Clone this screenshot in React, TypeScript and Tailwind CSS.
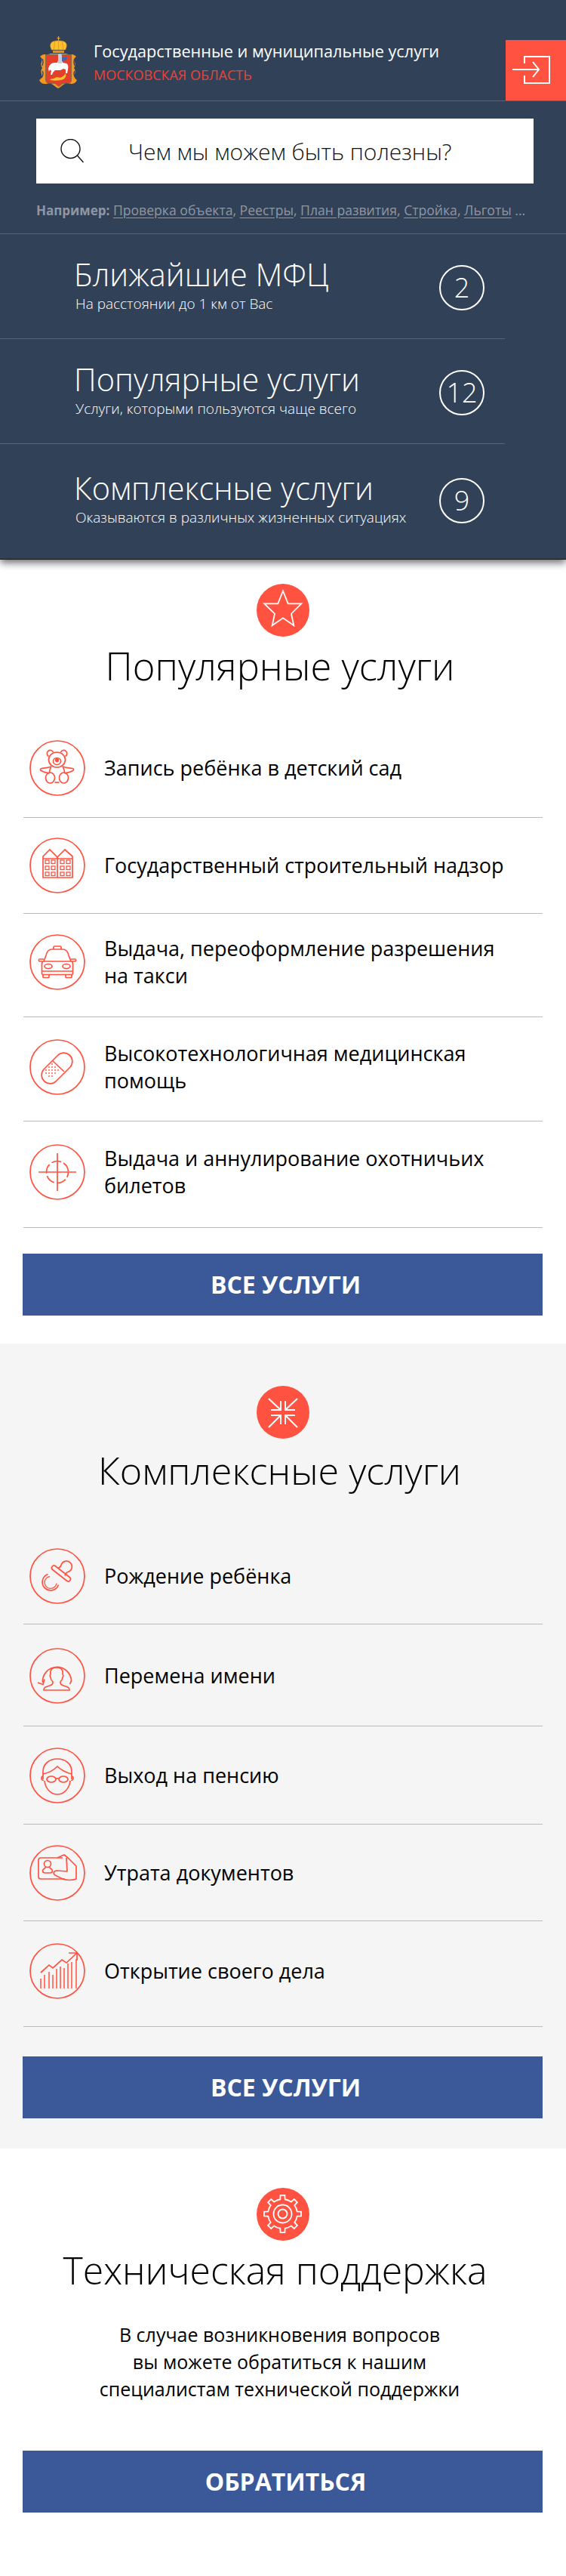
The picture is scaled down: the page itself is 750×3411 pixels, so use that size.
import React from "react";

const R = "#ff5240";

function gearPath(cx: number, cy: number, outer: number, inner: number, teeth: number) {
  const pts: string[] = [];
  const step = (Math.PI * 2) / teeth;
  const p = (r: number, t: number) => `${(cx + r * Math.cos(t)).toFixed(2)} ${(cy + r * Math.sin(t)).toFixed(2)}`;
  for (let i = 0; i < teeth; i++) {
    const a = i * step - Math.PI / 2;
    const w = step * 0.21;
    const w2 = step * 0.15;
    pts.push(`${i === 0 ? "M" : "L"}${p(inner, a - w)}`, `L${p(outer, a - w2)}`, `L${p(outer, a + w2)}`, `L${p(inner, a + w)}`);
    pts.push(`A${inner} ${inner} 0 0 1 ${p(inner, a + step - w)}`);
  }
  return pts.join(" ") + "Z";
}

function Emblem() {
  return (
    <svg width="54" height="75" viewBox="0 0 54 75" className="shrink-0">
      <path d="M26.500 0v6M24.500 2.500h4" stroke="#f6a623" strokeWidth="1.200" />
      <path d="M17.500 18c-3-5-2-10 2-11 2-1 4-1 7-1s6 0 7 1c4 1 5 6 2 11z" fill="#fdc02f" stroke="#d98a12" strokeWidth=".6" />
      <path d="M26.500 6v12M21.500 7l-1 11M31.500 7l1 11" stroke="#d98a12" strokeWidth=".7" />
      <path d="M19 19h15v3H19z" fill="#e8930f" />
      <path d="M8 24c-3 0-5 2-6 3 3 2 3 4 2 7-1 3-1 5 1 8-2 3-2 5-1 8 1 4 0 6-3 8 2 4 4 5 8 5 3 0 5-1 8 0 3 1 6 5 9 6 3-1 6-5 9-6 3-1 5 0 8 0 4 0 6-1 8-5-3-2-4-4-3-8 1-3 1-5-1-8 2-3 2-5 1-8-1-3-1-5 2-7-1-1-3-3-6-3-3 0-6 0-8-1H16c-2 1-5 1-8 1z" fill="#f6981f" />
      <path d="M5 30c2 3 1 6 0 9M5 46c2 3 1 6-1 9M48 30c-2 3-1 6 0 9M48 46c-2 3-1 6 1 9M10 66c4-1 7 0 10 3M43 66c-4-1-7 0-10 3" stroke="#314157" strokeWidth="1.300" fill="none" />
      <path d="M9 24h35v33c0 4-2 6-6 6h-6l-5 4-5-4h-6c-4 0-7-2-7-6z" fill="#314157" opacity=".55" />
      <path d="M10 25h33v32c0 4-2 5-5 5h-6.500l-5 4-5-4H15c-3 0-5-1-5-5z" fill="#e2402c" />
      <path d="M13 43c1-4 3-7 7-8l5 0 2-6h3l2 6 5 1c2 1 3 4 2 8l-1 5-2 0 0-5-3-1-4 2-7 0-3 3-1 3-2 0 1-5-2-2-1 3z" fill="#fff" />
      <path d="M26 24l3-1 2 2 0 11-5 0z" fill="#c6d0dc" />
      <path d="M31 28l8-1-3 5-5 1z" fill="#3b6ab5" />
      <path d="M15 58c3-3 5-1 7-3 3-2 7 1 9-1 2-1 4-3 5-5 1 3 0 6-3 8-5 2-12 2-18 1z" fill="#f9c22e" />
    </svg>
  );
}

function LoginIcon() {
  return (
    <svg width="80" height="80" viewBox="0 0 80 80" fill="none" stroke="#fff" strokeWidth="2">
      <path d="M25 31V22H58V57H25V47" />
      <path d="M9 39H44M36 29l8 10-8 10" />
    </svg>
  );
}

function SearchIcon() {
  return (
    <svg width="32" height="32" viewBox="0 0 32 32" fill="none" stroke="#111" strokeWidth="1.400" className="shrink-0">
      <circle cx="13.500" cy="13" r="12.500" />
      <path d="M22.500 22l8 9" />
    </svg>
  );
}

function Count({ n }: { n: string }) {
  return (
    <div className="w-[60px] h-[60px] rounded-full border-2 border-white flex items-center justify-center text-[36px] font-light text-white leading-none">
      {n}
    </div>
  );
}

function HeaderRow({ t, s, n, cls }: { t: string; s: string; n: string; cls: string }) {
  return (
    <div className={`flex w-[669px] items-center justify-between pl-[98px] pr-[27px] ${cls}`}>
      <div className="text-white">
        <div className="text-[41.500px] font-light leading-[50px] mt-[-8px]">{t}</div>
        <div className="text-[19px] font-light leading-[26px] mt-[1px] ml-[2px]">{s}</div>
      </div>
      <Count n={n} />
    </div>
  );
}

const icons: Record<string, React.ReactNode> = {
  bear: (
    <>
      <path d="M25.500 21.500a4.300 4.300 0 1 1 6-5.500M41.500 16a4.300 4.300 0 1 1 6 5.500" />
      <ellipse cx="36.500" cy="26" rx="11" ry="10" />
      <ellipse cx="36.500" cy="28" rx="5" ry="4.500" />
      <circle cx="36.500" cy="26.500" r="1.800" fill={R} />
      <path d="M29 35c-4 1.500-9 2-13 2.500-2 .5-2 2-.5 3 3 2 7 2.500 11 3.500M44 35c4 1.500 9 2 13 2.500 2 .5 2 2 .5 3-3 2-7 2.500-11 3.500" />
      <path d="M29 35c-2 3-2.500 6-2.500 9M44 35c2 3 2.500 6 2.500 9" />
      <ellipse cx="27.500" cy="50" rx="6" ry="7" />
      <ellipse cx="45.500" cy="50" rx="6" ry="7" />
      <path d="M33.500 56h6" />
    </>
  ),
  building: (
    <>
      <path d="M18 53V25l9-9 10 10 10-10 10 9v28z" />
      <path d="M37 26v27M18 28h39" />
      <g strokeWidth="1.300">
        <rect x="21" y="30" width="5" height="4.500" />
        <rect x="29" y="30" width="5" height="4.500" />
        <rect x="41" y="30" width="5" height="4.500" />
        <rect x="49" y="30" width="5" height="4.500" />
        <rect x="21" y="38" width="5" height="4.500" />
        <rect x="29" y="38" width="5" height="4.500" />
        <rect x="41" y="38" width="5" height="4.500" />
        <rect x="49" y="38" width="5" height="4.500" />
        <rect x="21" y="46" width="5" height="4.500" />
        <rect x="29" y="46" width="5" height="4.500" />
        <rect x="41" y="46" width="5" height="4.500" />
        <rect x="49" y="46" width="5" height="4.500" />
      </g>
    </>
  ),
  taxi: (
    <>
      <path d="M32 20v-2.500c0-1 .5-1.500 1.500-1.500h7c1 0 1.500.5 1.500 1.500V20" />
      <path d="M19 36l3-8c1-5 4-8 8-8h14c4 0 7 3 8 8l3 8" />
      <path d="M18 36h38c1 .5 1.500 2 1.500 4v12c0 1-.5 1.500-1.500 1.500H18c-1 0-1.500-.5-1.500-1.500V40c0-2 .5-3.500 1.500-4z" />
      <path d="M17 36h-3.500c-1.500 0-1.500-3 0-3H19M57 36h3.500c1.500 0 1.500-3 0-3H55" />
      <ellipse cx="25" cy="42.500" rx="5" ry="3" />
      <ellipse cx="49" cy="42.500" rx="5" ry="3" />
      <path d="M17 49h40M18 53.500v3c0 .5.5 1 1 1h6c.5 0 1-.5 1-1v-3M48 53.500v3c0 .5.5 1 1 1h6c.5 0 1-.5 1-1v-3" />
    </>
  ),
  pill: (
    <>
      <path d="M19 40l18-18a10.500 10.500 0 0 1 17 15L36 55a10.500 10.500 0 0 1-17-15z" />
      <path d="M31 29l15 14" />
      <g fill={R} stroke="none">
        <circle cx="30" cy="33" r=".9" /><circle cx="34" cy="37" r=".9" /><circle cx="38" cy="41" r=".9" />
        <circle cx="26" cy="37" r=".9" /><circle cx="30" cy="41" r=".9" /><circle cx="34" cy="45" r=".9" />
        <circle cx="22" cy="41" r=".9" /><circle cx="26" cy="45" r=".9" /><circle cx="30" cy="49" r=".9" />
        <circle cx="30" cy="37" r=".9" /><circle cx="34" cy="41" r=".9" /><circle cx="26" cy="41" r=".9" />
        <circle cx="30" cy="45" r=".9" /><circle cx="22" cy="45" r=".9" /><circle cx="26" cy="49" r=".9" />
      </g>
    </>
  ),
  target: (
    <>
      <circle cx="37" cy="37" r="14.500" strokeDasharray="13 3.500" strokeDashoffset="6" />
      <path d="M37 12v50M12 37h50" />
    </>
  ),
  pacifier: (
    <>
      <path d="M24.500 34.500a11 11 0 1 0 14 14" />
      <path d="M27 37.500a8 8 0 1 0 9 9" strokeWidth="1.300" />
      <rect x="27" y="30.500" width="30" height="6" rx="3" transform="rotate(38 42 33.500)" />
      <path d="M38 26.500c3-1 3.500-2 4-4a7.300 7.300 0 1 1 9 9c-2 .5-3 1.500-4 5" />
    </>
  ),
  person: (
    <>
      <path d="M17.500 46a19 19 0 1 1 38-3c0 1.500-1 3-2 5" />
      <path d="M11 46l7 2.500 2-7" />
      <path d="M19 56c0-4 2-4 8-6 4-1.500 4-3 4-5-2-2-3-4-3-6-1-1-1-3 0-4-1-7 3-9 8-9s9 2 8 9c1 1 1 3 0 4 0 2-1 4-3 6 0 2 0 3.500 4 5 6 2 8 2 8 6z" />
    </>
  ),
  glasses: (
    <>
      <path d="M18 42V32c0-10 8-17 19-17s19 7 19 17v10" />
      <path d="M18 35c6-1 14-5 19-10 3 3 12 9 19 10" />
      <path d="M18 38c-2 0-3 3-1 5 .5.5 1 .5 2 .5M56 38c2 0 3 3 1 5-.5.5-1 .5-2 .5" />
      <path d="M20 44c1 10 8 18 17 18s16-8 17-18" />
      <ellipse cx="29" cy="42" rx="6" ry="4" />
      <ellipse cx="45" cy="42" rx="6" ry="4" />
      <path d="M35 41h4" />
    </>
  ),
  card: (
    <>
      <path d="M44 17H15c-2 0-3 1-3 3v22c0 2 1 3 3 3h32" />
      <path d="M37 17l9-4 5 4 11 11v17c-6 2-12 2-18 0l-10-5c-3-2-2-6 2-6l14 1-1-18" strokeLinejoin="round" />
      <circle cx="24" cy="25" r="4.500" />
      <path d="M21.500 29c0 2-4 3-4 5 0 2 1 3 3 3h7c2 0 3-1 3-3 0-2-4-3-4-5" />
    </>
  ),
  chart: (
    <>
      <path d="M15 39l11-10 5 4 12-11 6 4 14-13M52 13h11v10" />
      <g strokeWidth="1.500">
        <path d="M15 60V47M20 60V42M26 60V38M31 60V42M36 60V34M41 60V31M46 60V33M51 60V27M56 60V25M62 60V21" />
      </g>
    </>
  ),
};

function ItemIcon({ name }: { name: string }) {
  return (
    <svg width="74" height="74" viewBox="0 0 74 74" fill="none" stroke={R} strokeWidth="1.700" className="shrink-0">
      <circle cx="37" cy="37" r="36" />
      {icons[name]}
    </svg>
  );
}

function Item({ icon, cls, children }: { icon: string; cls: string; children: React.ReactNode }) {
  return (
    <div className={`flex items-center pl-[8px] gap-[25px] border-b border-[#bbbbbb] ${cls}`}>
      <ItemIcon name={icon} />
      <div className="text-[27px] font-medium leading-[36px] text-black">{children}</div>
    </div>
  );
}

function Badge({ children }: { children: React.ReactNode }) {
  return (
    <div className="mx-auto w-[70px] h-[70px] rounded-full bg-[#ff5240] flex items-center justify-center">
      <svg width="70" height="70" viewBox="0 0 70 70" fill="none" stroke="#fff" strokeWidth="1.800">
        {children}
      </svg>
    </div>
  );
}

function Btn({ children }: { children: React.ReactNode }) {
  return (
    <div className="mx-[30px] w-[689px] h-[82px] bg-[#3b5998] flex items-center justify-center pl-[8px] text-white text-[32px] font-bold">
      {children}
    </div>
  );
}

export default function App() {
  return (
    <div className="w-[750px] h-[3411px] bg-white overflow-hidden font-['Open_Sans',sans-serif]">
      <header className="relative z-10 bg-[#314157] h-[741px] pt-[53px] border-b border-[#111] shadow-[0_4px_10px_rgba(0,0,0,0.6)]">
        <div className="flex items-start justify-between h-[81px] border-b border-[#56637a]">
          <div className="flex items-center pl-[51px] gap-[19px] mt-[-5px]">
            <Emblem />
            <div className="mt-[-6px]">
              <div className="text-[21.700px] text-white leading-[30px]">Государственные и муниципальные услуги</div>
              <div className="text-[18px] text-[#ea4335] leading-[26px] mt-[3px]">МОСКОВСКАЯ ОБЛАСТЬ</div>
            </div>
          </div>
          <div className="w-[80px] h-[80px] bg-[#ff5240]">
            <LoginIcon />
          </div>
        </div>
        <div className="mx-[48px] mt-[23px] w-[659px] h-[86px] bg-white flex items-center pl-[32px]">
          <SearchIcon />
          <div className="ml-[58px] text-[30px] font-light text-[#111]">Чем мы можем быть полезны?</div>
        </div>
        <div className="h-[67px] pl-[48px] pt-[20px] border-b border-[#56637a] text-[17.600px] leading-[30px] text-[#8f96a3] whitespace-nowrap">
          <b className="font-bold text-[17px]">Например:</b>{" "}
          <span className="underline underline-offset-[3px]">Проверка объекта</span>,{" "}
          <span className="underline underline-offset-[3px]">Реестры</span>,{" "}
          <span className="underline underline-offset-[3px]">План развития</span>,{" "}
          <span className="underline underline-offset-[3px]">Стройка</span>,{" "}
          <span className="underline underline-offset-[3px]">Льготы</span> ...
        </div>
        <HeaderRow t="Ближайшие МФЦ" s="На расстоянии до 1 км от Вас" n="2" cls="h-[139px] border-b border-[#56637a] pt-[3px]" />
        <HeaderRow t="Популярные услуги" s="Услуги, которыми пользуются чаще всего" n="12" cls="h-[139px] border-b border-[#56637a] pt-[3px]" />
        <HeaderRow t="Комплексные услуги" s="Оказываются в различных жизненных ситуациях" n="9" cls="h-[152px] pb-[2px]" />
      </header>

      <section className="h-[1038px] pt-[32px]">
        <Badge>
          <path d="M35 9.500L41.700 26.300H59.300L46 39.700L49.300 55.300L35 45.300L20.700 55.300L24 39.700L10.300 26.300H28.300Z" />
        </Badge>
        <h2 className="text-center pr-[8px] text-[50.700px] font-light leading-[60px] mt-[9px] text-black">Популярные услуги</h2>
        <div className="mx-[31px] mt-[68px]">
          <Item icon="bear" cls="pb-[28px]">Запись ребёнка в детский сад</Item>
          <Item icon="building" cls="pt-[26px] pb-[26px]">Государственный строительный надзор</Item>
          <Item icon="taxi" cls="pt-[27px] pb-[35px]">Выдача, переоформление разрешения<br />на такси</Item>
          <Item icon="pill" cls="pt-[29px] pb-[34px]">Высокотехнологичная медицинская<br />помощь</Item>
          <Item icon="target" cls="pt-[30px] pb-[36px]">Выдача и аннулирование охотничьих<br />билетов</Item>
        </div>
        <div className="mt-[34px]"><Btn>ВСЕ УСЛУГИ</Btn></div>
      </section>

      <section className="h-[1066px] bg-[#f5f5f5] pt-[56px]">
        <Badge>
          <g strokeWidth="2">
            <path d="M16 17L32 32M19 32H32V20M54 17L38 32M51 32H38V20M16 55L32 39M19 39H32V51M54 55L38 39M51 39H38V51" />
          </g>
        </Badge>
        <h2 className="text-center pr-[9px] text-[50.300px] font-light leading-[60px] mt-[12px] text-black">Комплексные услуги</h2>
        <div className="mx-[31px] mt-[73px]">
          <Item icon="pacifier" cls="pb-[26px]">Рождение ребёнка</Item>
          <Item icon="person" cls="pt-[31px] pb-[29px]">Перемена имени</Item>
          <Item icon="glasses" cls="pt-[28px] pb-[27px]">Выход на пенсию</Item>
          <Item icon="card" cls="pt-[27px] pb-[26px]">Утрата документов</Item>
          <Item icon="chart" cls="pt-[29px] pb-[36px]">Открытие своего дела</Item>
        </div>
        <div className="mt-[39px]"><Btn>ВСЕ УСЛУГИ</Btn></div>
      </section>

      <section className="pt-[52px]">
        <Badge>
          <path d={gearPath(34.500, 34.500, 24.700, 19.500, 8)} />
          <circle cx="34.500" cy="34.500" r="12" />
          <circle cx="34.500" cy="34.500" r="6" />
        </Badge>
        <h2 className="text-center pr-[21px] text-[50px] font-light leading-[60px] mt-[9px] text-black">Техническая поддержка</h2>
        <p className="text-center pr-[9px] text-[25px] font-medium leading-[36px] mt-[37px] text-black">
          В случае возникновения вопросов
          <br />
          вы можете обратиться к нашим
          <br />
          специалистам технической поддержки
        </p>
        <div className="mt-[64px]"><Btn>ОБРАТИТЬСЯ</Btn></div>
      </section>
    </div>
  );
}
